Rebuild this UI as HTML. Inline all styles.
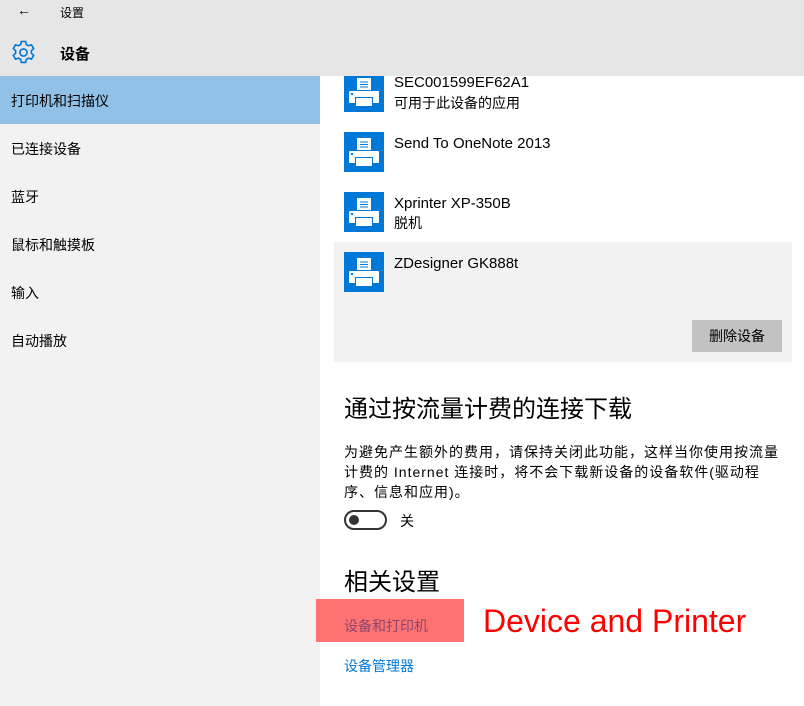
<!DOCTYPE html>
<html><head><meta charset="utf-8"><style>
*{margin:0;padding:0;box-sizing:border-box}
body{width:804px;height:706px;position:relative;overflow:hidden;background:#fff;font-family:"Liberation Sans","Noto Sans CJK SC",sans-serif;color:#000}
.a{position:absolute;white-space:nowrap}
.hdr{position:absolute;left:0;top:0;width:804px;height:76px;background:#e6e6e6}
.nav{position:absolute;left:0;top:76px;width:320px;height:630px;background:#f2f2f2}
.nav div{position:absolute;left:11px;font-size:14px}
.tile{position:absolute;left:344px;width:40px;height:40px;background:#0078d7}
.t{font-size:15px;line-height:20px}
</style></head><body>
<div class="hdr"></div>
<div class="a" style="left:17px;top:2px;font-size:14px">&#8592;</div>
<div class="a" style="left:60px;top:4px;font-size:12px">设置</div>
<svg class="a" style="left:10px;top:39px" width="27" height="27" viewBox="0 0 27 27"><g fill="none" stroke="#0078d7" stroke-width="1.6"><path d="M11.3 2.5h4.4l.6 3 2.3 1.3 2.9-1 2.2 3.8-2.3 2v2.7l2.3 2-2.2 3.8-2.9-1-2.3 1.3-.6 3h-4.4l-.6-3-2.3-1.3-2.9 1-2.2-3.8 2.3-2v-2.7l-2.3-2 2.2-3.8 2.9 1 2.3-1.3z"/><circle cx="13.5" cy="13.5" r="3.6"/></g></svg>
<div class="a" style="left:60px;top:43px;font-size:15px;font-weight:bold">设备</div>
<div class="nav">
<div style="left:0;top:0;width:320px;height:48px;background:#91c1e6"></div>
<div style="top:15px">打印机和扫描仪</div>
<div style="top:63px">已连接设备</div>
<div style="top:111px">蓝牙</div>
<div style="top:159px">鼠标和触摸板</div>
<div style="top:207px">输入</div>
<div style="top:255px">自动播放</div>
</div>
<div class="a" style="left:334px;top:242px;width:458px;height:120px;background:#f2f2f2"></div>
<svg width="0" height="0" style="position:absolute"><defs><g id="p"><rect x="13" y="6" width="14" height="12" fill="#fff"/><path d="M16 10h8M16 12.5h8M16 15h8" stroke="#0078d7" stroke-width="1"/><rect x="5" y="19" width="30" height="12" rx="1" fill="#fff"/><rect x="7" y="21" width="2" height="2" fill="#0078d7"/><rect x="11" y="25" width="18" height="9" fill="#0078d7"/><rect x="12" y="26" width="16" height="8" fill="#fff"/></g></defs></svg>
<svg class="tile" style="top:72px" viewBox="0 0 40 40"><use href="#p"/></svg>
<svg class="tile" style="top:132px" viewBox="0 0 40 40"><use href="#p"/></svg>
<svg class="tile" style="top:192px" viewBox="0 0 40 40"><use href="#p"/></svg>
<svg class="tile" style="top:252px" viewBox="0 0 40 40"><use href="#p"/></svg>
<div class="hdr" style="left:320px;width:484px;height:76px;top:0"></div>
<div class="a t" style="left:394px;top:73px">SEC001599EF62A1</div>
<div class="a t" style="left:394px;top:93px;font-size:14px">可用于此设备的应用</div>
<div class="a t" style="left:394px;top:134px">Send To OneNote 2013</div>
<div class="a t" style="left:394px;top:194px">Xprinter XP-350B</div>
<div class="a t" style="left:394px;top:213px;font-size:14px">脱机</div>
<div class="a t" style="left:394px;top:254px">ZDesigner GK888t</div>
<div class="a" style="left:692px;top:320px;width:90px;height:32px;background:#c2c2c2;font-size:14px;line-height:32px;text-align:center">删除设备</div>
<div class="a" style="left:344px;top:394px;font-size:24px;line-height:32px">通过按流量计费的连接下载</div>
<div class="a" style="left:344px;top:442px;font-size:14px;line-height:20px;letter-spacing:1px">为避免产生额外的费用，请保持关闭此功能，这样当你使用按流量<br>计费的 Internet 连接时，将不会下载新设备的设备软件(驱动程<br>序、信息和应用)。</div>
<div class="a" style="left:344px;top:510px;width:43px;height:20px;border:2px solid #333;border-radius:10px"></div>
<div class="a" style="left:349px;top:515px;width:10px;height:10px;border-radius:5px;background:#333"></div>
<div class="a" style="left:400px;top:511px;font-size:14px">关</div>
<div class="a" style="left:344px;top:567px;font-size:24px;line-height:32px">相关设置</div>
<div class="a" style="left:316px;top:599px;width:148px;height:43px;background:#fe7272"></div>
<div class="a" style="left:344px;top:616px;font-size:14px;color:#8a4670">设备和打印机</div>
<div class="a" style="left:483px;top:601px;font-size:32px;color:#ff0000;line-height:40px">Device and Printer</div>
<div class="a" style="left:344px;top:656px;font-size:14px;color:#0078d7">设备管理器</div>
</body></html>
